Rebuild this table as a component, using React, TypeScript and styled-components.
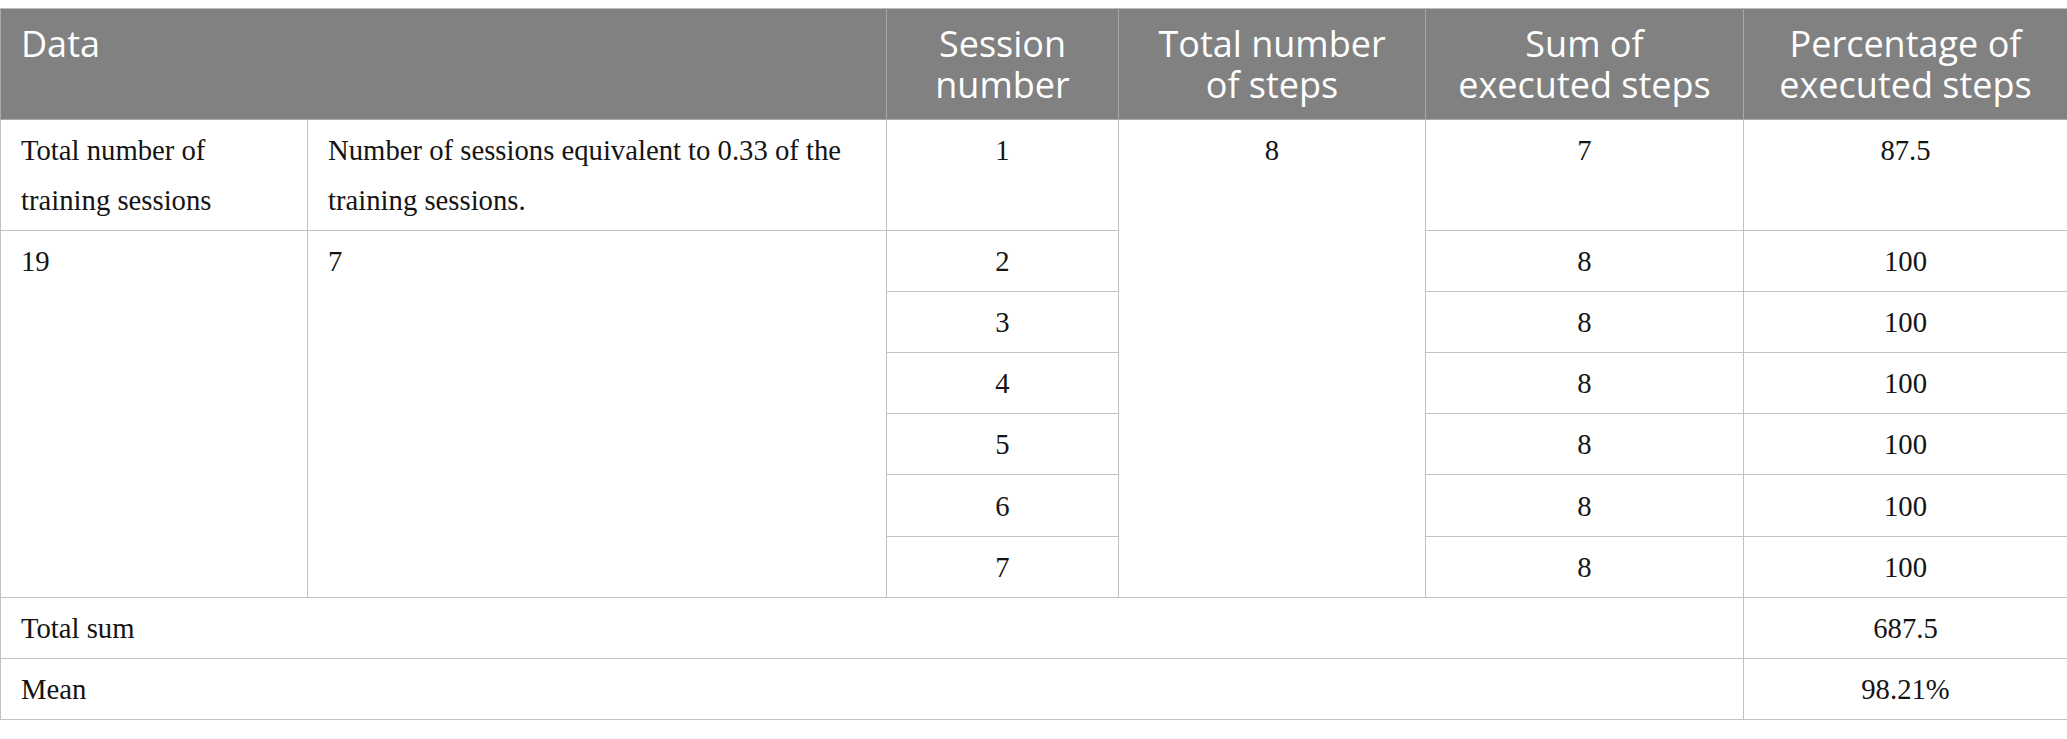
import React from "react";
import styled, { createGlobalStyle } from "styled-components";

const GlobalStyle = createGlobalStyle`
  html, body {
    margin: 0;
    padding: 0;
    background: #ffffff;
  }
  body {
    font-family: "Liberation Serif", "Times New Roman", serif;
  }
`;

const Page = styled.div`
  padding-top: 8px;
  width: 2067px;
`;

const Table = styled.table`
  width: 2067px;
  table-layout: fixed;
  border-collapse: collapse;
  border: 1px solid #bdbdbd;
`;

const HeadRow = styled.tr`
  background: #808180;
`;

const HeadCell = styled.th<{ $align?: "left" | "center" }>`
  color: #ffffff;
  font-family: "Open Sans", "Noto Sans", sans-serif;
  font-weight: 400;
  font-size: 36px;
  line-height: 41px;
  text-align: ${(p) => p.$align ?? "center"};
  vertical-align: top;
  padding: ${(p) => (p.$align === "left" ? "14px 20px 14px 20px" : "14px 2px")};
  border: 1px solid #a9a9a9;
  border-top-color: #bdbdbd;
  white-space: nowrap;
`;

const HeadLine = styled.span`
  display: block;
`;

const Cell = styled.td<{ $align?: "left" | "center" }>`
  color: #141414;
  font-family: "Liberation Serif", "Times New Roman", serif;
  font-size: 28.7px;
  line-height: 50px;
  text-align: ${(p) => p.$align ?? "center"};
  vertical-align: top;
  padding: 5.1px 20px 5px 20px;
  border: 1px solid #c2c2c2;
`;

const Col = styled.col<{ $w: number }>`
  width: ${(p) => p.$w}px;
`;

const widths = [307, 579, 232, 307, 318, 324];

const headers: string[][] = [
  ["Session", "number"],
  ["Total number", "of steps"],
  ["Sum of", "executed steps"],
  ["Percentage of", "executed steps"],
];

const laterSessions = [
  { n: 3, sum: 8, pct: 100 },
  { n: 4, sum: 8, pct: 100 },
  { n: 5, sum: 8, pct: 100 },
  { n: 6, sum: 8, pct: 100 },
  { n: 7, sum: 8, pct: 100 },
];

export default function App() {
  return (
    <>
      <GlobalStyle />
      <Page>
        <Table>
          <colgroup>
            {widths.map((w, i) => (
              <Col key={i} $w={w} />
            ))}
          </colgroup>
          <thead>
            <HeadRow>
              <HeadCell colSpan={2} $align="left">
                Data
              </HeadCell>
              {headers.map((lines) => (
                <HeadCell key={lines.join(" ")}>
                  {lines.map((l) => (
                    <HeadLine key={l}>{l}</HeadLine>
                  ))}
                </HeadCell>
              ))}
            </HeadRow>
          </thead>
          <tbody>
            <tr>
              <Cell $align="left">Total number of training sessions</Cell>
              <Cell $align="left">
                Number of sessions equivalent to 0.33 of the training sessions.
              </Cell>
              <Cell>1</Cell>
              <Cell rowSpan={7}>8</Cell>
              <Cell>7</Cell>
              <Cell>87.5</Cell>
            </tr>
            <tr>
              <Cell $align="left" rowSpan={6}>
                19
              </Cell>
              <Cell $align="left" rowSpan={6}>
                7
              </Cell>
              <Cell>2</Cell>
              <Cell>8</Cell>
              <Cell>100</Cell>
            </tr>
            {laterSessions.map((s) => (
              <tr key={s.n}>
                <Cell>{s.n}</Cell>
                <Cell>{s.sum}</Cell>
                <Cell>{s.pct}</Cell>
              </tr>
            ))}
            <tr>
              <Cell $align="left" colSpan={5}>
                Total sum
              </Cell>
              <Cell>687.5</Cell>
            </tr>
            <tr>
              <Cell $align="left" colSpan={5}>
                Mean
              </Cell>
              <Cell>98.21%</Cell>
            </tr>
          </tbody>
        </Table>
      </Page>
    </>
  );
}
